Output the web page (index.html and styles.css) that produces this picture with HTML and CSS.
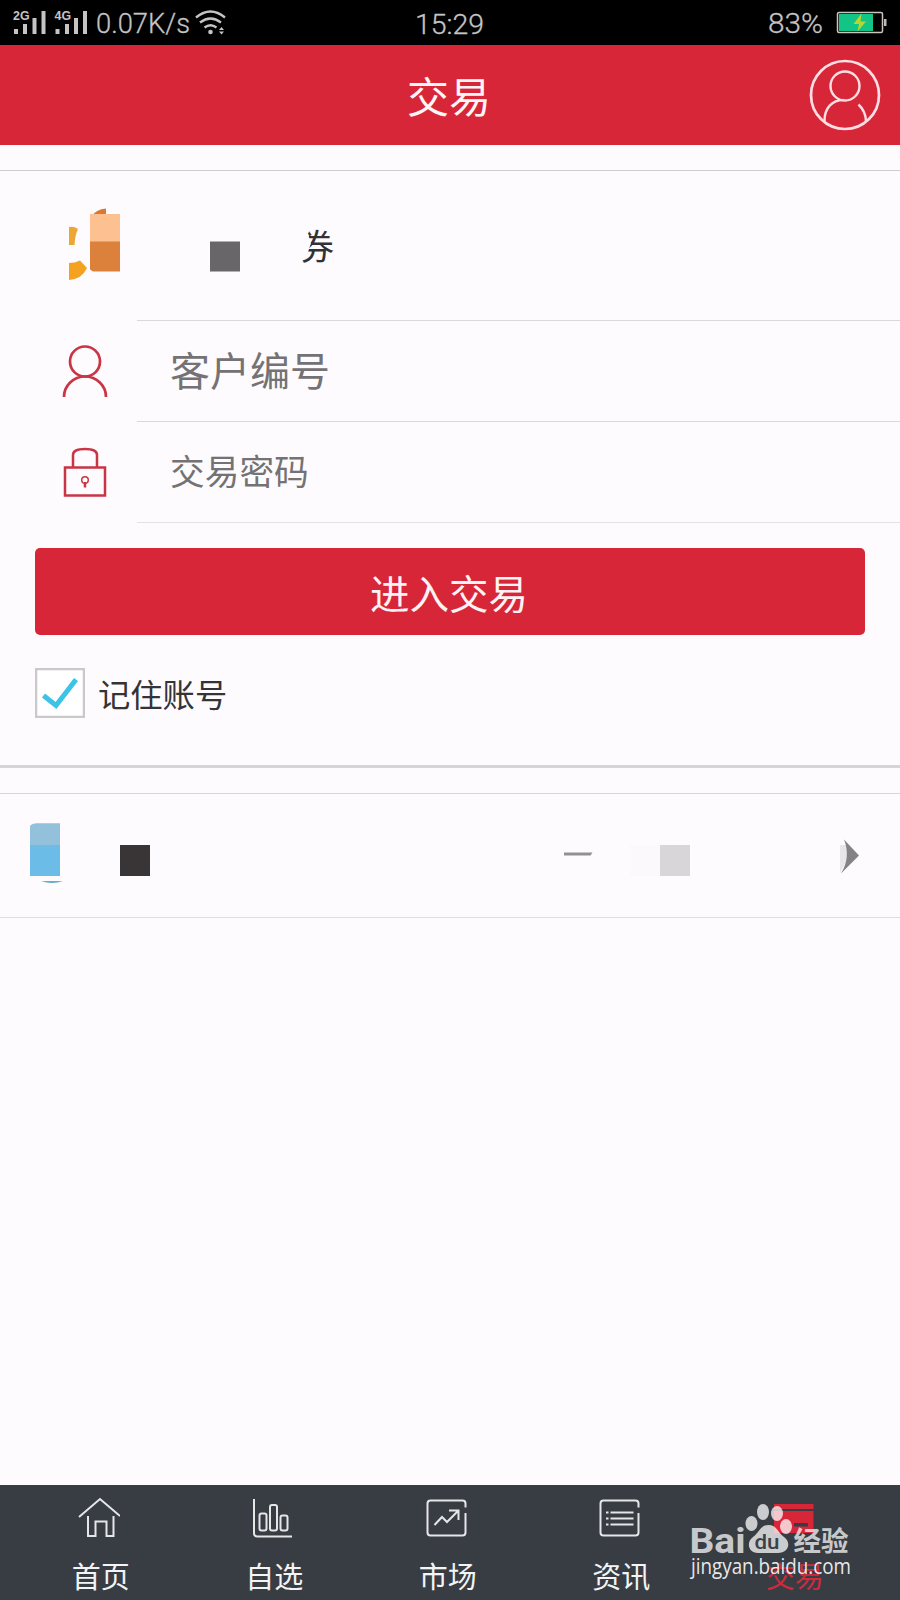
FILE: index.html
```html
<!DOCTYPE html>
<html lang="zh-CN">
<head>
<meta charset="utf-8">
<title>交易</title>
<link rel="stylesheet" href="styles.css">
</head>
<body>
<div class="app">
  <div class="status">
    <svg class="status-left" width="240" height="45" viewBox="0 0 240 45">
      <g fill="#c4c4c4">
        <text class="net" x="13" y="19.500" textLength="16.500" lengthAdjust="spacingAndGlyphs">2G</text>
        <text class="net" x="54.500" y="19.500" textLength="16.500" lengthAdjust="spacingAndGlyphs">4G</text>
        <path d="M14 29h4v5h-4zM23 24h4v10h-4zM32.500 18h4v16h-4zM41.500 11h4v23h-4zM55.500 29h4v5h-4zM65 24h4v10h-4zM74 18h4v16h-4zM83 11h4v23h-4z"/>
        <text class="stat" x="96" y="33.300" textLength="94" lengthAdjust="spacingAndGlyphs">0.07K/s</text>
        <circle cx="210.500" cy="32" r="2.300"/>
        <path d="M219 30l2.500-3 2.500 3zM219 31.500l2.500 3 2.500-3z"/>
      </g>
      <path d="M196 17.500q14.500-12 29 0M200 22.500q10.500-8 21 0M204.500 27.500q6-4.500 12 0" fill="none" stroke="#c4c4c4" stroke-width="2.300"/>
    </svg>
    <svg class="status-time" width="90" height="45" viewBox="0 0 90 45"><text class="stat" x="10" y="34" textLength="69" lengthAdjust="spacingAndGlyphs">15:29</text></svg>
    <svg class="status-right" width="140" height="45" viewBox="760 0 140 45">
      <text class="stat" x="768" y="32.500" textLength="55" lengthAdjust="spacingAndGlyphs">83%</text>
      <rect x="837.500" y="12.500" width="45" height="20" rx="1.500" fill="#000" stroke="#c9c5be" stroke-width="1.500"/>
      <rect x="839" y="14" width="34" height="17" fill="#12c486"/>
      <rect x="884" y="19" width="2.500" height="7" fill="#bbb"/>
      <path d="M861.500 13.500L853.500 24H859L857.500 31.500L866 21.500H860.500Z" fill="#b9d531"/>
    </svg>
  </div>

  <header class="header">
    <h1 class="title">交易</h1>
    <svg class="avatar" width="72" height="72" viewBox="0 0 72 72" fill="none" stroke="#ffdfe3" stroke-width="2.700">
      <circle cx="36" cy="36" r="34"/>
      <circle cx="36" cy="27" r="14.500" stroke-width="2.400"/>
      <path d="M15.500 62C15.500 49 23 41 34.500 41M49.500 45.500Q56.500 52 57 62" stroke-width="2.400"/>
    </svg>
  </header>

  <section class="login">
    <svg width="900" height="149" viewBox="0 171 900 149">
      <path d="M69 227q5-1 9 2-3 6-3.500 16h-5.500z" fill="#eca632"/>
      <path d="M69 263q6 0 11-2.500l7 7.500q-5 11-18 12z" fill="#f4a21f"/>
      <path d="M91 217q5-8 15-8.500V217z" fill="#d97735"/>
      <path d="M90 214h30v28H90z" fill="#fdc091"/>
      <path d="M90 241.500h30V271.500H93l-3-2z" fill="#dc813b"/>
      <rect x="210" y="241.500" width="30" height="30" fill="#69666a"/>
      <clipPath id="name-clip"><path d="M312 224H340V268H296L307 255L311 243L308 234Z"/></clipPath>
      <text class="broker-name" x="299" y="259.500" clip-path="url(#name-clip)">券</text>
    </svg>
    <label class="field">
      <svg class="field-icon" width="50" height="56" viewBox="60 343 50 56" fill="none" stroke="#c93545" stroke-width="2.700">
        <circle cx="85" cy="361.500" r="15"/><path d="M64 397a21 20.500 0 0 1 42 0"/>
      </svg>
      <span class="field-text account">客户编号</span>
    </label>
    <label class="field">
      <svg class="field-icon" width="50" height="56" viewBox="60 444 50 56" fill="none" stroke="#c93545" stroke-width="2.500">
        <rect x="65" y="467.500" width="40" height="28"/>
        <path d="M73 467V455q0-6 12-6t12 6v12"/>
        <circle cx="85" cy="480" r="3.300" stroke-width="1.500"/><path d="M85 482v5.500"/>
      </svg>
      <span class="field-text password">交易密码</span>
    </label>
    <button class="submit">进入交易</button>
    <div class="remember">
      <svg class="check" width="50" height="50" viewBox="0 0 50 50" fill="none">
        <rect x="1" y="1" width="48" height="48" stroke="#cbc8cb" stroke-width="2.500"/>
        <path d="M8.500 27.500L21 37.500L41 11.500" stroke="#3cc3e8" stroke-width="5"/>
      </svg>
      <span>记住账号</span>
    </div>
  </section>

  <section class="entry">
    <svg width="900" height="123" viewBox="0 794 900 123">
      <path d="M30 826q2-2.700 7-2.700H60V846H30z" fill="#93c1db"/>
      <path d="M30 845h30v31H30z" fill="#6bbde8"/>
      <path d="M41 881h22q-11 4-22 0z" fill="#62aeca"/>
      <rect x="120" y="845" width="30" height="31" fill="#393537"/>
      <path d="M564 852.500h28.500l-2 3H564z" fill="#929092"/>
      <rect x="630" y="845" width="30" height="31" fill="#fbf9fb"/>
      <rect x="660" y="845" width="30" height="31" fill="#d8d6d9"/>
      <path d="M840 845h6l3 11-9 17z" fill="#e8e6e8"/>
      <path d="M844 839.500L859 855.500L841 873.500Q851 857 844 839.500Z" fill="#858285"/>
    </svg>
  </section>

  <nav class="tabs">
    <a class="tab">
      <svg width="42" height="44" viewBox="0 0 42 44"><path d="M1 22L22 4L42 21M10 21V41H17.500V26.500H28.500V41H35.500V21"/></svg>
      <span>首页</span>
    </a>
    <a class="tab">
      <svg width="42" height="44" viewBox="0 0 42 44"><path d="M3 4V38Q3 41.500 6.500 41.500H41"/><rect x="8.500" y="18.500" width="7" height="17" rx="2"/><rect x="19" y="10" width="7" height="25.500" rx="2"/><rect x="29.500" y="20.500" width="7" height="15" rx="2"/></svg>
      <span>自选</span>
    </a>
    <a class="tab">
      <svg width="42" height="44" viewBox="0 0 42 44"><path d="M40.500 12.500V8.500Q40.500 5.500 37.500 5.500H5.500Q2.500 5.500 2.500 8.500V37.500Q2.500 40.500 5.500 40.500H37.500Q40.500 40.500 40.500 37.500V18"/><path d="M9.500 30L17 22L22 27L33 16M24 15.500H33.500V25"/></svg>
      <span>市场</span>
    </a>
    <a class="tab">
      <svg width="42" height="44" viewBox="0 0 42 44"><path d="M40.500 12.500V8.500Q40.500 5.500 37.500 5.500H5.500Q2.500 5.500 2.500 8.500V37.500Q2.500 40.500 5.500 40.500H37.500Q40.500 40.500 40.500 37.500V18M8 17.500h2.500M8 23.500h2.500M8 29.500h2.500M12.500 17.500h23M12.500 23.500h23M12.500 29.500h23"/></svg>
      <span>资讯</span>
    </a>
    <a class="tab active">
      <svg width="42" height="44" viewBox="0 0 42 44"><path class="solid" d="M2 9h39.500v5H2zM2 16h39.500v22H2zM22 28v3.500h14V28z" fill-rule="evenodd"/></svg>
      <span>交易</span>
    </a>
    <svg class="watermark" width="170" height="85" viewBox="685 1500 170 85">
      <g fill="#fff" fill-opacity=".74">
        <text class="wm-bold" x="689.500" y="1553" font-size="34.500" textLength="56" lengthAdjust="spacingAndGlyphs">Bai</text>
        <text class="wm-cjk" x="793.500" y="1550.500" font-size="27.500">经验</text>
        <ellipse cx="751.500" cy="1523.500" rx="6" ry="7.500"/>
        <ellipse cx="763" cy="1512" rx="6" ry="8"/>
        <ellipse cx="777" cy="1513.500" rx="6" ry="7.500"/>
        <ellipse cx="786" cy="1526.500" rx="6" ry="7.500"/>
        <path d="M768.500 1525C777 1525 778 1533 784 1537C792 1543 788 1553 778 1553H758C748 1553 746 1542 753 1537C759 1533 760 1525 768.500 1525Z"/>
        <text class="wm-url" x="691" y="1574" font-size="22" fill-opacity=".9" textLength="160" lengthAdjust="spacingAndGlyphs">jingyan.baidu.com</text>
      </g>
      <text class="wm-du" x="754.500" y="1549" font-size="21" textLength="25" lengthAdjust="spacingAndGlyphs" fill="#3b4147">du</text>
    </svg>
  </nav>
</div>
</body>
</html>
```
FILE: styles.css
```css
* { box-sizing: border-box; }
body {
  margin: 0;
  background: #fdfbfd;
  font-family: "Noto Sans CJK SC", sans-serif;
}
svg { display: block; flex: none; }
.app {
  display: flex;
  flex-direction: column;
  width: 900px;
  height: 1600px;
  overflow: hidden;
}
.status {
  display: grid;
  grid-template-columns: 405px 90px 1fr;
  height: 45px;
  flex: none;
  background: #000;
}
.status-right { justify-self: end; }
.net { font: bold 12px "Liberation Sans", sans-serif; }
.stat { font: 300 28px Roboto, sans-serif; fill: #c4c4c4; stroke: #c4c4c4; stroke-width: .3px; }
.header {
  display: grid;
  grid-template-columns: 1fr auto 1fr;
  align-items: center;
  height: 100px;
  flex: none;
  padding-right: 19px;
  background: #d82639;
}
.title {
  grid-column: 2;
  margin: 0 0 0 17px;
  color: #fff5f7;
  font-size: 42px;
  font-weight: 400;
  line-height: 60px;
}
.avatar { justify-self: end; }
.login {
  height: 598px;
  flex: none;
  margin-top: 25px;
  border-top: 1px solid #cfcdcf;
  border-bottom: 3px solid #d6d4d6;
}
.broker-name { font-size: 35px; fill: #333133; }
.field {
  display: flex;
  align-items: center;
  height: 101px;
  padding-left: 60px;
}
.field-text {
  flex: 1;
  height: 101px;
  margin-left: 27px;
  padding-left: 33px;
  border-top: 1px solid #dad8da;
  color: #747274;
  font-weight: 400;
  line-height: 97px;
}
.account { font-size: 40px; }
.password {
  height: 102px;
  border-bottom: 1px solid #e4e2e4;
  font-size: 34.700px;
  line-height: 97px;
}
.submit {
  display: block;
  width: 830px;
  height: 87px;
  margin: 26px 35px 33px;
  padding: 0 2px 0 0;
  border: 0;
  border-radius: 5px;
  background: #d82639;
  color: #fff2f4;
  font: 400 39.500px/85px "Noto Sans CJK SC", sans-serif;
}
.remember {
  display: flex;
  align-items: center;
  gap: 13px;
  padding-left: 35px;
  color: #353335;
  font-size: 32.300px;
  font-weight: 400;
  line-height: 50px;
}
.check { background: #fff; }
.entry {
  flex: none;
  height: 125px;
  margin-top: 25px;
  border-top: 1px solid #d7d5d7;
  border-bottom: 1px solid #dfdddf;
}
.tabs {
  position: relative;
  display: grid;
  grid-template-columns: repeat(5, 173.500px);
  height: 115px;
  flex: none;
  margin-top: auto;
  padding: 10px 0 0 14px;
  background: #383d44;
}
.tab {
  display: flex;
  flex-direction: column;
  align-items: center;
  gap: 14px;
  color: #f2f4f6;
  font-size: 29px;
  line-height: 44px;
}
.tab svg { fill: none; stroke: #e5e6e8; stroke-width: 2; margin-right: 4px; }
.tab .solid { fill: #d82639; stroke: none; }
.tab.active { color: #cb2b3c; }
.watermark { position: absolute; left: 685px; top: 15px; }
.wm-bold { font-family: Roboto, sans-serif; font-weight: 700; }
.wm-du { font-family: Roboto, sans-serif; font-weight: 500; }
.wm-cjk { font-weight: bold; }
.wm-url { font-family: "Open Sans", sans-serif; }
```
